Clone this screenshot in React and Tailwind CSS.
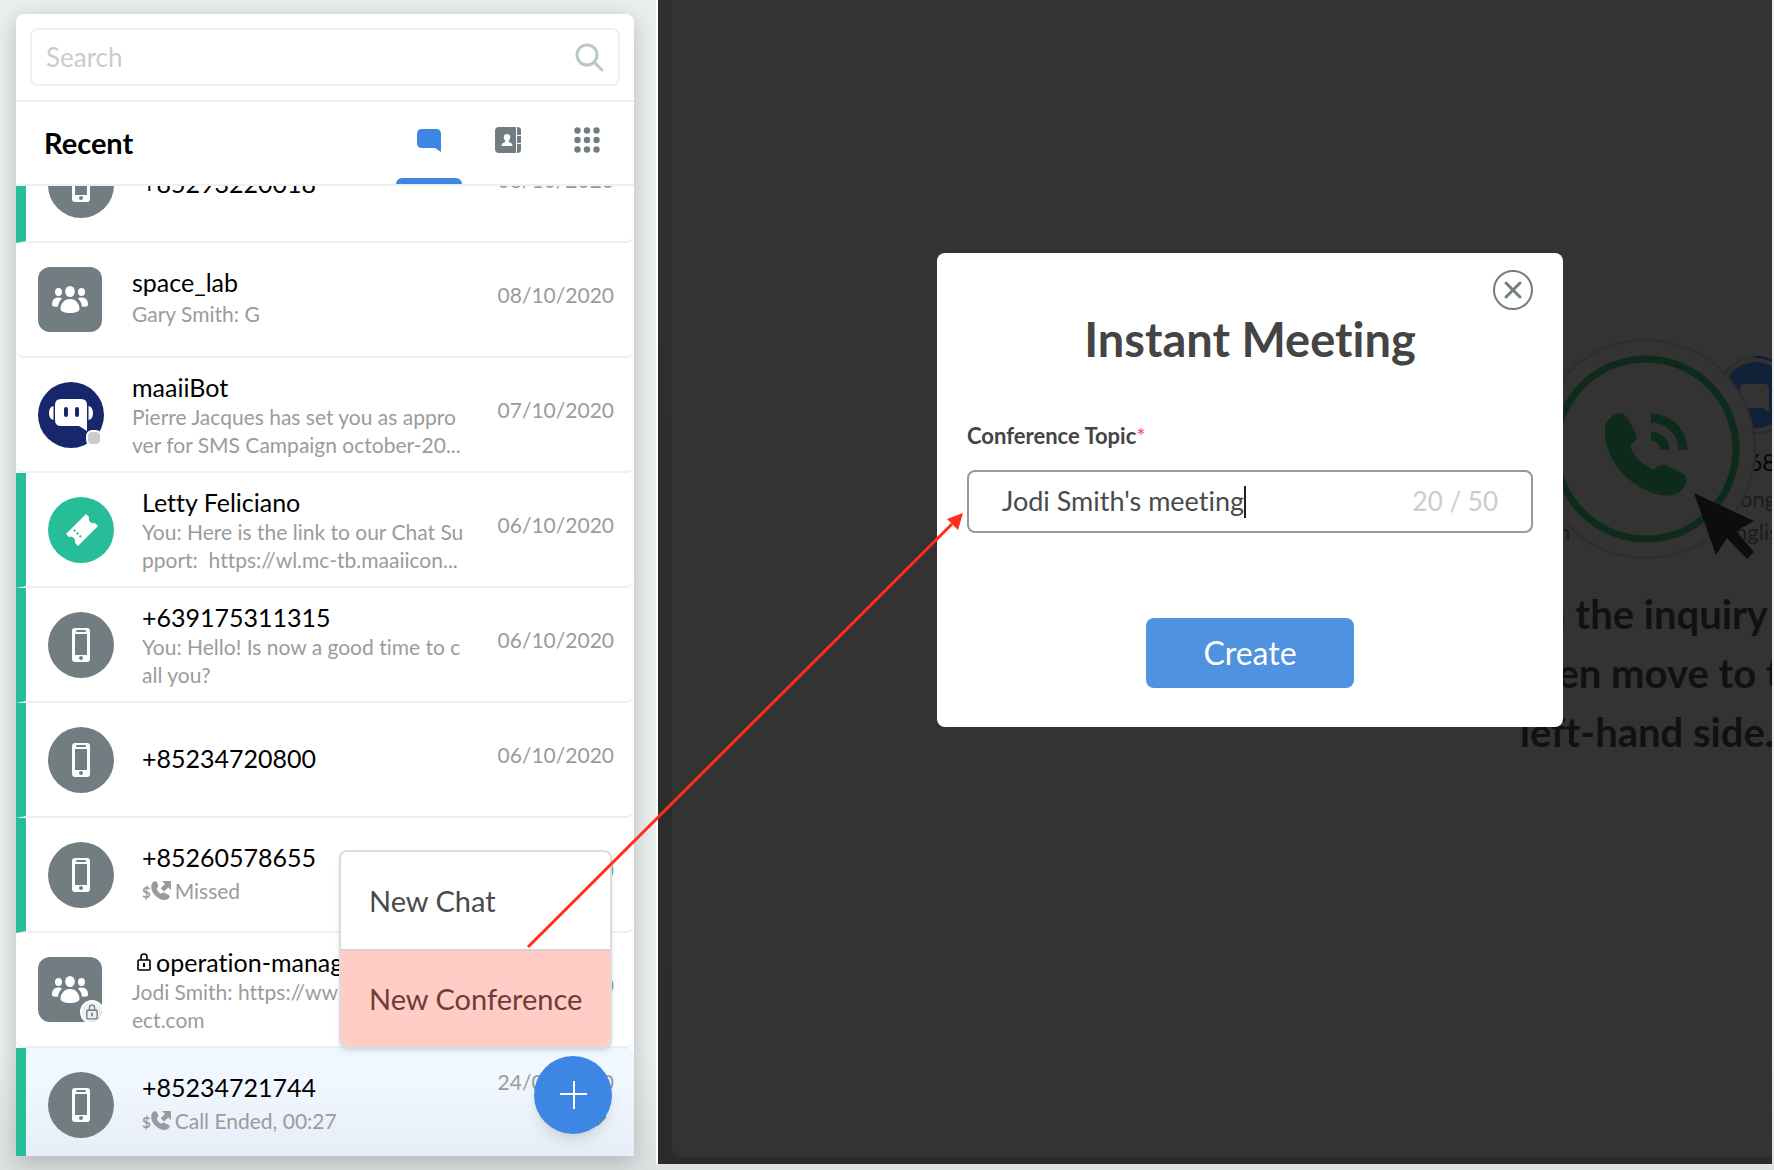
import { useState } from "react";

const conversations = [
    { id: 1, kind: "phone", inquiry: true, name: "+85293220018", date: "08/10/2020" },
    { id: 2, kind: "group", name: "space_lab", lines: ["Gary Smith: G"], date: "08/10/2020" },
    {
        id: 3,
        kind: "bot",
        name: "maaiiBot",
        lines: ["Pierre Jacques has set you as appro", "ver for SMS Campaign october-20..."],
        date: "07/10/2020",
    },
    {
        id: 4,
        kind: "ticket",
        inquiry: true,
        name: "Letty Feliciano",
        lines: ["You: Here is the link to our Chat Su", "pport:  https://wl.mc-tb.maaiicon..."],
        date: "06/10/2020",
    },
    {
        id: 5,
        kind: "phone",
        inquiry: true,
        name: "+639175311315",
        lines: ["You: Hello! Is now a good time to c", "all you?"],
        date: "06/10/2020",
    },
    { id: 6, kind: "phone", inquiry: true, name: "+85234720800", date: "06/10/2020" },
    { id: 7, kind: "phone", inquiry: true, name: "+85260578655", call: "Missed", date: "06/10/2020" },
    {
        id: 8,
        kind: "group",
        locked: true,
        name: "operation-manag",
        lines: ["Jodi Smith: https://ww", "ect.com"],
        date: "06/10/2020",
    },
    {
        id: 9,
        kind: "phone",
        inquiry: true,
        selected: true,
        name: "+85234721744",
        call: "Call Ended, 00:27",
        date: "24/09/2020",
    },
];

const PhoneIcon = () => (
    <svg width="18" height="34" viewBox="0 0 18 34" aria-hidden="true">
        <rect width="18" height="34" rx="3" fill="#fff" />
        <rect x="3" y="6" width="12" height="21" fill="#727d81" />
        <rect x="4" y="2" width="10" height="2" rx="1" fill="#727d81" />
        <circle cx="9" cy="30" r="2" fill="#727d81" />
    </svg>
);

const GroupIcon = () => (
    <svg width="36" height="27" viewBox="0 0 36 27" fill="#fff" aria-hidden="true">
        <ellipse cx="18" cy="5.500" rx="4.800" ry="5.500" />
        <ellipse cx="6.500" cy="6" rx="3.500" ry="4" />
        <ellipse cx="29.500" cy="6" rx="3.500" ry="4" />
        <path d="M18 13c6 0 9.500 5 9.500 10 0 2-3.500 4-9.500 4s-9.500-2-9.500-4c0-5 3.500-10 9.500-10z" />
        <path d="M6 11.500c2 0 3 .3 4 1-2.600 2.600-3.600 5-3.900 8C2 21 0 20.500 0 18.500c0-4 2-7 6-7zM30 11.500c-2 0-3 .3-4 1 2.600 2.600 3.600 5 3.900 8 4.100.5 6.100 0 6.100-2 0-4-2-7-6-7z" />
    </svg>
);

const BotIcon = () => (
    <svg width="44" height="34" viewBox="0 0 44 34" fill="#fff" aria-hidden="true">
        <path d="M12 1h20q6 0 6 6v26l-8-5H12q-6 0-6-6V7q0-6 6-6z" />
        <path d="M4.500 8v14Q0 21 0 15t4.500-7zM39.500 8v14q4.500-1 4.500-7t-4.500-7z" />
        <rect x="15" y="9" width="4" height="10" rx="2" fill="#18266b" />
        <rect x="26" y="9" width="4" height="10" rx="2" fill="#18266b" />
    </svg>
);

const TicketIcon = () => (
    <svg width="34" height="34" viewBox="0 0 34 34" aria-hidden="true">
        <path
            d="M22 1l3 3c-1 4 2 7 6 6l3 3-20 20-3-3c1-4-2-7-6-6l-3-3z"
            fill="#fff"
        />
        <path d="M10 17l8 8" stroke="#28bd99" strokeWidth="2" strokeDasharray="2 2" />
    </svg>
);

const LockIcon = ({ className }) => (
    <svg className={className} viewBox="0 0 14 18" fill="none" stroke="currentColor" aria-hidden="true">
        <rect x="1" y="7" width="12" height="10" rx="1" strokeWidth="1.600" />
        <path d="M4 7V4a3 3 0 0 1 6 0v3" strokeWidth="1.600" />
        <path d="M7 10v4" strokeWidth="2" />
    </svg>
);

const CallIcon = () => (
    <svg width="20" height="20" viewBox="0 0 20 20" fill="#9b9b9b" aria-hidden="true">
        <path d="M3 .6C4.400-.2 5.500.1 6 1.300l1.200 3.200c.4 1-.2 1.700-1.300 2.700 0 2 2.200 5 4.700 5.400 1-1.200 1.900-1.500 2.800-.9l4.400 2.200c1.200.7 1.100 1.900.2 3-1.900 2.200-5 2.800-8.500 1.300C4.500 16 .3 11 .2 6c0-2.500 1-4.500 2.800-5.400z" />
        <path d="M11 0h9v9l-2.600-2.600-4.400 4.200-3.400-3.400L14 3z" />
    </svg>
);

const Avatar = ({ kind, locked }) => {
    let styles = "relative flex shrink-0 items-center justify-center";

    if (kind === "group") {
        styles += " mr-0.5 h-[65px] w-16 overflow-hidden rounded-xl bg-[#727d81]";
    } else {
        styles += " size-[66px] rounded-full";
    }
    if (kind === "phone") styles += " bg-[#727d81]";
    if (kind === "bot") styles += " bg-[#18266b]";
    if (kind === "ticket") styles += " bg-[#28bd99]";

    return (
        <div className={styles}>
            {kind === "phone" && <PhoneIcon />}
            {kind === "group" && <GroupIcon />}
            {kind === "bot" && <BotIcon />}
            {kind === "ticket" && <TicketIcon />}
            {kind === "bot" && (
                <span className="absolute right-0.5 bottom-0.5 size-4 rounded-md border-2 border-white bg-[#ccc]" />
            )}
            {locked && (
                <span className="absolute -right-0.5 -bottom-0.5 flex size-6 items-center justify-center rounded-full border-2 border-white bg-[#eef1f1] text-[#727d81]">
                    <LockIcon className="h-4 w-3" />
                </span>
            )}
        </div>
    );
};

const ConversationRow = ({ chat }) => {
    let styles = "flex h-[115px] w-full shrink-0 items-center border-b-2 border-b-[#ebf0f0] pr-5 pl-[22px] text-left";
    let lineStyles = "text-[21px] whitespace-pre text-[#9b9b9b]";

    if (chat.inquiry) styles += " rounded-br-lg border-l-10 border-l-[#28bd99]";
    if (!chat.inquiry) styles += " rounded-b-lg";
    if (chat.selected) styles += " rounded-tr-lg bg-linear-to-b from-[#f0f7ff] from-30% to-[#e6edf6]";

    if (chat.lines?.length > 1) lineStyles += " leading-7";
    if (chat.lines?.length === 1) lineStyles += " leading-8";

    return (
        <li>
            <button type="button" className={styles}>
                <Avatar kind={chat.kind} locked={chat.locked} />
                <div className="ml-7 min-w-0 flex-1">
                    <p className="flex items-center text-[25px] leading-8 whitespace-nowrap text-black">
                        {chat.locked && <LockIcon className="mr-1 ml-1 h-[18px] w-4" />}
                        {chat.name}
                    </p>
                    {chat.lines &&
                        chat.lines.map((line) => (
                            <p key={line} className={lineStyles}>
                                {line}
                            </p>
                        ))}
                    {chat.call && (
                        <p className="flex h-9 items-center text-[21px] text-[#9b9b9b]">
                            <span className="mt-1 text-[15px] font-bold">$</span>
                            <CallIcon />
                            <span className="ml-1">{chat.call}</span>
                        </p>
                    )}
                    {/* a lone name sits a little above the middle */}
                    {!chat.call && (!chat.lines || chat.lines.length === 1) && (
                        <div className="h-1" />
                    )}
                </div>
                <div className="mb-2.5 flex flex-col items-end gap-3">
                    <time className="text-[21px] leading-7 text-[#9b9b9b]">
                        {chat.date}
                    </time>
                    {chat.selected && (
                        <svg width="24" height="24" viewBox="0 0 24 24" fill="#8c8c8c" aria-hidden="true">
                            <path d="M0 8l16-2v4l-8 8H0z" />
                        </svg>
                    )}
                </div>
            </button>
        </li>
    );
};

const Sidebar = () => {
    const [search, setSearch] = useState("");

    return (
        <aside className="relative mt-3.5 ml-4 flex h-[calc(100vh-28px)] w-[618px] shrink-0 flex-col rounded-t-lg bg-white shadow-[0_6px_24px_rgba(0,0,0,0.22)]">
            <div className="border-b-2 border-[#ebf0f0] p-3.5">
                <label className="flex h-[58px] items-center rounded-lg border-2 border-[#ebf0f0] px-3.5">
                    <input
                        type="text"
                        aria-label="Search"
                        placeholder="Search"
                        value={search}
                        onChange={(event) => setSearch(event.target.value)}
                        className="min-w-0 flex-1 text-[26px] outline-none placeholder:text-[#ccc]"
                    />
                    <svg width="30" height="30" viewBox="0 0 30 30" fill="none" stroke="#b9c7cc" strokeWidth="3" strokeLinecap="round" aria-hidden="true">
                        <circle cx="13" cy="13" r="10" />
                        <path d="M21 21l7 7" />
                    </svg>
                </label>
            </div>
            <header className="flex h-[84px] shrink-0 items-stretch justify-between border-b-2 border-[#ebf0f0] pr-3.5 pl-7">
                <h1 className="self-center text-[29px] font-bold text-black">Recent</h1>
                <nav className="flex gap-[13px]">
                    <button
                        type="button"
                        aria-label="Chats"
                        className="flex w-[66px] flex-col items-center justify-between pt-[26px]">
                        <svg width="24" height="24" viewBox="0 0 24 24" fill="#3e86e3" aria-hidden="true">
                            <path d="M5 1h14q5 0 5 5v18l-6-4H5q-5 0-5-5V6q0-5 5-5z" />
                        </svg>
                        <span className="h-1.5 w-full rounded-t-md bg-[#3e86e3]" />
                    </button>
                    <button
                        type="button"
                        aria-label="Contacts"
                        className="flex w-[66px] justify-center pt-[25px]">
                        <svg width="26" height="26" viewBox="0 0 26 26" fill="#727d81" aria-hidden="true">
                            <path d="M4 0h17v26H4q-4 0-4-4V4q0-4 4-4zM22 0q4 0 4 3v5h-4zM22 9h4v7h-4zM22 17h4v6q0 3-4 3z" />
                            <path d="M12 7c4 0 4 5 1.500 7 0 2 4 1 4 5h-11c0-4 4-3 4-5C8 12 8 7 12 7z" fill="#fff" />
                        </svg>
                    </button>
                    <button
                        type="button"
                        aria-label="Dial pad"
                        className="flex w-[66px] justify-center pt-[25px]">
                        <svg width="26" height="26" viewBox="0 0 26 26" fill="#727d81" aria-hidden="true">
                            {[3.5, 13, 22.5].map((y) =>
                                [3.5, 13, 22.5].map((x) => (
                                    <circle key={`${x}-${y}`} cx={x} cy={y} r="3.200" />
                                ))
                            )}
                        </svg>
                    </button>
                </nav>
            </header>
            {/* the list is scrolled, its first row is cut by the header */}
            <div className="min-h-0 flex-1 overflow-hidden">
                <ul className="-mt-[58px]">
                    {conversations.map((chat) => (
                        <ConversationRow key={chat.id} chat={chat} />
                    ))}
                </ul>
            </div>

            <div className="absolute right-[22px] bottom-[108px] w-[273px] rounded-lg border-2 border-[#dcdcdc] bg-white text-[29px] text-[#4a4a4a] shadow-md">
                <button type="button" className="block h-[97px] w-full pl-7 text-left">
                    New Chat
                </button>
                <button
                    type="button"
                    className="block h-[97px] w-full rounded-b-md border-t-2 border-[#dccfce] bg-[#ffccc6] pl-7 text-left text-[#733b36]">
                    New Conference
                </button>
            </div>
            <button
                type="button"
                aria-label="New"
                className="absolute right-[22px] bottom-[22px] flex size-[78px] items-center justify-center rounded-full bg-[#3e86e3] shadow-lg">
                <svg width="28" height="28" viewBox="0 0 28 28" stroke="#fff" strokeWidth="2" aria-hidden="true">
                    <path d="M15 0v28M1 13h27" />
                </svg>
            </button>
        </aside>
    );
};

const Onboarding = () => (
    <div className="absolute top-[338px] right-0 w-[252px] overflow-hidden">
        <svg width="252" height="224" viewBox="1520 338 252 224" aria-hidden="true">
            <circle cx="1756" cy="395" r="38" fill="#323232" stroke="#2c2c2c" strokeWidth="2" />
            <circle cx="1756" cy="395" r="33" fill="#0f2238" />
            <path d="M1755 357a38 38 0 0 1 19 5" fill="none" stroke="#0d1c3c" strokeWidth="2" />
            <path d="M1745 384h19q5 0 5 5v23l-6-4h-18q-5 0-5-5v-14q0-5 5-5z" fill="#333" />
            <text x="1749" y="471" fontSize="23" fill="#050505">68</text>
            <text x="1740" y="507" fontSize="22" fill="#1c1c1c">ong</text>
            <text x="1735" y="540" fontSize="22" fill="#1c1c1c">nglis</text>
            <circle cx="1646" cy="449" r="109" fill="#333" stroke="#2d2d2d" strokeWidth="2" />
            <text x="1558" y="540" fontSize="22" fill="#1c1c1c">n</text>
            <circle cx="1646" cy="449" r="90" fill="none" stroke="#0e2a1b" strokeWidth="7" />
            <path
                d="M1614 415c6-3 11-2 14 4l8 15c2 5 0 7-6 11 2 10 12 20 24 25 6-6 9-6 13-4l15 7c6 3 6 9 2 14-5 8-14 10-24 8-32-7-57-38-55-66 0-6 4-11 9-14z"
                fill="#0e2a1b"
            />
            <path d="M1651 436a14 14 0 0 1 14 14M1651 418a32 32 0 0 1 32 32" fill="none" stroke="#0e2a1b" strokeWidth="9" />
            <path d="M1694 493l60 28-18 10 18 21-7 7-20-21-11 17z" fill="#0d0d0d" />
        </svg>
        <p className="mt-[23px] text-[40px] leading-[59px] font-bold whitespace-nowrap text-[#111]">
            on the inquiry
            <br />
            then move to the
            <br />
            left-hand side.
        </p>
    </div>
);

const MeetingDialog = () => {
    const [topic, setTopic] = useState("Jodi Smith's meeting");

    return (
        <section
            role="dialog"
            aria-label="Instant Meeting"
            className="relative mt-[253px] ml-[265px] flex h-[474px] w-[626px] flex-col rounded-lg bg-white px-[30px] pt-[17px]">
            <button type="button" aria-label="Close" className="self-end">
                <svg width="40" height="40" viewBox="0 0 40 40" fill="none" stroke="#727d81" strokeWidth="2" aria-hidden="true">
                    <circle cx="20" cy="20" r="19" />
                    <path d="M13 13l14 14M27 13l-14 14" strokeWidth="3" strokeLinecap="round" />
                </svg>
            </button>
            <h2 className="text-center text-[47px] leading-[58px] font-bold text-[#444]">
                Instant Meeting
            </h2>
            <label htmlFor="topic" className="mt-[54px] text-[22px] leading-7 font-bold text-[#444]">
                Conference Topic
                <span className="font-normal text-[#ff4a5e]">*</span>
            </label>
            <div className="mt-5 flex h-[63px] items-center rounded-lg border-2 border-[#999] px-[33px]">
                <div className="flex min-w-0 flex-1 items-center">
                    <input
                        id="topic"
                        type="text"
                        value={topic}
                        onChange={(event) => setTopic(event.target.value)}
                        className="field-sizing-content text-[27px] text-[#4a4a4a] outline-none"
                    />
                    <span className="h-8 w-0.5 bg-[#222]" />
                </div>
                <span className="text-[26px] text-[#ccc]">{topic.length} / 50</span>
            </div>
            <button
                type="button"
                className="mt-[85px] h-[70px] w-[208px] self-center rounded-lg bg-[#4f92e0] text-[32px] text-white">
                Create
            </button>
        </section>
    );
};

export default function App() {
    return (
        <div className="relative flex h-screen overflow-hidden bg-linear-to-b from-[#ebeff0] from-90% to-[#dde1e2] font-[Lato,sans-serif] [font-variant-ligatures:none]">
            <Sidebar />
            <main className="mr-0.5 mb-1.5 ml-[22px] flex flex-1 border-l-2 border-white bg-linear-to-b from-[#2f3131] to-[#292c2b]">
                <div className="relative mb-[7px] ml-3.5 flex-1 rounded-bl-lg bg-[#333]">
                    <Onboarding />
                    <MeetingDialog />
                </div>
            </main>
            <svg className="pointer-events-none absolute top-0 left-0" width="1774" height="1170" aria-hidden="true">
                <path d="M528 947L952 524" stroke="#ff2d1a" strokeWidth="3" />
                <path d="M963 513l-5 17-11-11z" fill="#ff2d1a" />
            </svg>
        </div>
    );
}
